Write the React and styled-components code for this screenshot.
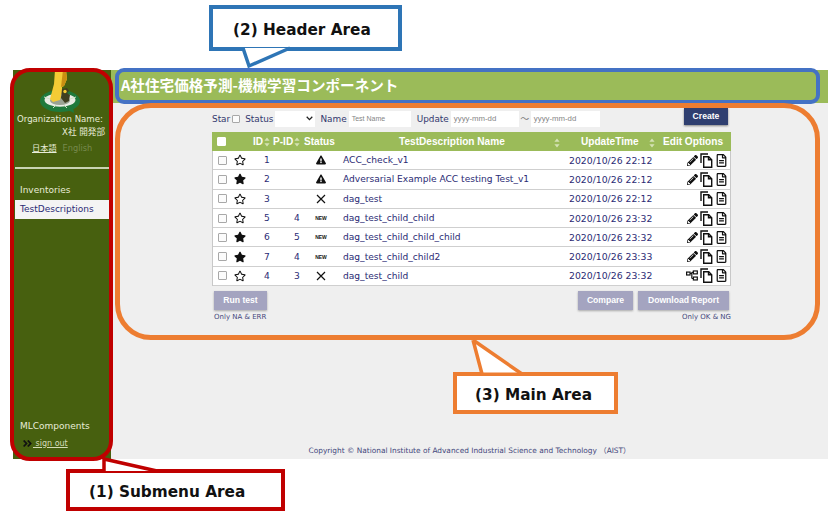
import styled, { createGlobalStyle } from "styled-components"
import { FaStar, FaRegStar, FaExclamationTriangle, FaPencilAlt, FaRegFileAlt, FaAngleDoubleRight } from "react-icons/fa"

const GlobalStyle = createGlobalStyle`
    html, body {
        margin: 0;
        padding: 0;
        background: #fff;
        font-family: "DejaVu Sans", "Noto Sans CJK JP", sans-serif;
    }
`

const rows = [
    { id: 1, star: false, status: "warn", name: "ACC_check_v1", time: "2020/10/26 22:12", edit: "pencil" },
    { id: 2, star: true, status: "warn", name: "Adversarial Example ACC testing Test_v1", time: "2020/10/26 22:12", edit: "pencil" },
    { id: 3, star: false, status: "cross", name: "dag_test", time: "2020/10/26 22:12" },
    { id: 5, pid: 4, star: false, status: "new", name: "dag_test_child_child", time: "2020/10/26 23:32", edit: "pencil" },
    { id: 6, pid: 5, star: true, status: "new", name: "dag_test_child_child_child", time: "2020/10/26 23:32", edit: "pencil" },
    { id: 7, pid: 4, star: true, status: "new", name: "dag_test_child_child2", time: "2020/10/26 23:33", edit: "pencil" },
    { id: 4, pid: 3, star: false, status: "cross", name: "dag_test_child", time: "2020/10/26 23:32", edit: "tree" },
]

const Logo = () => (
    <svg width="44" height="44" viewBox="0 0 44 44">
        <ellipse cx="22" cy="31" rx="20" ry="11" fill="#1f7a3c" />
        <path d="M30 40l6 3-1-6z" fill="#1f7a3c" />
        <ellipse cx="22" cy="30" rx="15.5" ry="6.8" fill="#e9ece5" />
        <ellipse cx="22" cy="30.5" rx="10" ry="4.6" fill="#9aa394" />
        <path d="M6 27l6 2M38 27l-6 2M15 38l3-3M29 38l-3-3" stroke="#cfe0c8" strokeWidth="1" />
        <path d="M17 0h11l1 9-3 7-2 1 0 6-2 7-7 2-3-3 4-15z" fill="#f4cb35" />
        <path d="M25 0h3l1 9-3 7-3 1z" fill="#c98f12" />
        <path d="M24 19l5-1 2 3-2 2 3 2-1 6-4 2-4-5z" fill="#3f3f20" />
        <circle cx="27" cy="21.5" r="1.7" fill="#f4cb35" />
    </svg>
)

const CopyIcon = () => (
    <svg width="13" height="15" viewBox="0 0 13 15" fill="none" stroke="#111" strokeWidth="1.4">
        <path d="M1 10V1h7" />
        <path d="M3.7 3.7h5l3 3v7.6h-8z" fill="#fff" />
        <path d="M8.5 3.7v3h3" />
    </svg>
)

const TreeIcon = () => (
    <svg width="12" height="11" viewBox="0 0 14 12" fill="none" stroke="#111" strokeWidth="1.4">
        <rect x="0.7" y="2" width="4" height="3.4" />
        <rect x="8.6" y="0.7" width="4.6" height="3.4" />
        <rect x="8.6" y="7.8" width="4.6" height="3.4" />
        <path d="M4.7 3.6h2.1M6.8 2.3v7.2M6.8 2.3h1.8M6.8 9.5h1.8" />
    </svg>
)

const CrossIcon = () => (
    <svg width="10" height="10" viewBox="0 0 10 10" stroke="#111" strokeWidth="1.2">
        <path d="M1 1l8 8M9 1l-8 8" />
    </svg>
)

const StatusIcon = ({ type }) => {
    if (type === "warn") return <FaExclamationTriangle size={10} color="#111" />
    if (type === "cross") return <CrossIcon />
    return <NewMark>NEW</NewMark>
}

const SortMark = () => (
    <svg width="6" height="10" viewBox="0 0 6 10" fill="#d5e2b5">
        <path d="M3 0.5l2.6 3.2H0.4zM3 9.5L0.4 6.3h5.2z" />
    </svg>
)

const App = () => {
    return (
        <>
            <GlobalStyle />
            <Frame>
                <Sidebar>
                    <LogoBox><Logo /></LogoBox>
                    <OrgLabel>Organization Name:</OrgLabel>
                    <OrgName>X社 開発部</OrgName>
                    <LangRow>
                        <LangLink>日本語</LangLink>
                        <LangOff>English</LangOff>
                    </LangRow>
                    <Rule />
                    <NavItem>Inventories</NavItem>
                    <NavItem $active>TestDescriptions</NavItem>
                    <SideBottom>
                        <NavItem>MLComponents</NavItem>
                        <SignOut>
                            <FaAngleDoubleRight size={11} color="#111" />
                            <span>&nbsp;sign out</span>
                        </SignOut>
                    </SideBottom>
                </Sidebar>
                <Content>
                    <Header>A社住宅価格予測-機械学習コンポーネント</Header>
                    <Main>
                        <Panel>
                            <Filters>
                                <FilterLabel>Star</FilterLabel>
                                <Check $size={8} $ml={2} />
                                <FilterLabel $ml={5}>Status</FilterLabel>
                                <FilterBox $w={40} $ml={2}>
                                    <svg width="7" height="5" viewBox="0 0 7 5" fill="none" stroke="#222" strokeWidth="1.3">
                                        <path d="M0.7 0.8l2.8 2.8 2.8-2.8" />
                                    </svg>
                                </FilterBox>
                                <FilterLabel $ml={5}>Name</FilterLabel>
                                <FilterInput $w={62} $ml={2}>Test Name</FilterInput>
                                <FilterLabel $ml={6}>Update</FilterLabel>
                                <FilterInput $w={68} $ml={2} $date>yyyy-mm-dd</FilterInput>
                                <Tilde>〜</Tilde>
                                <FilterInput $w={69} $ml={0} $date>yyyy-mm-dd</FilterInput>
                                <CreateButton>Create</CreateButton>
                            </Filters>
                            <Table>
                                <HeadRow>
                                    <Cell><Check $size={9} $white /></Cell>
                                    <Cell />
                                    <Cell $pl={4}>ID<SortMark /></Cell>
                                    <Cell $pl={0}>P-ID<SortMark /></Cell>
                                    <Cell $pl={3}>Status</Cell>
                                    <HeadName>TestDescription Name<SortPos><SortMark /></SortPos></HeadName>
                                    <HeadName $pl={17}>UpdateTime<SortPos><SortMark /></SortPos></HeadName>
                                    <Cell $pl={4}>Edit Options</Cell>
                                </HeadRow>
                                {rows.map((r) => (
                                    <Row key={r.id}>
                                        <Cell><Check $size={9} /></Cell>
                                        <Cell $pl={2}>{r.star ? <FaStar size={12} color="#111" /> : <FaRegStar size={12} color="#111" />}</Cell>
                                        <Cell $pl={14}>{r.id}</Cell>
                                        <Cell $pl={20}>{r.pid}</Cell>
                                        <StatusCell><StatusIcon type={r.status} /></StatusCell>
                                        <Cell $pl={3}>{r.name}</Cell>
                                        <TimeCell>{r.time}</TimeCell>
                                        <Options>
                                            {r.edit === "pencil" && <FaPencilAlt size={11} color="#111" />}
                                            {r.edit === "tree" && <TreeIcon />}
                                            <CopyIcon />
                                            <FaRegFileAlt size={13} color="#111" />
                                        </Options>
                                    </Row>
                                ))}
                            </Table>
                            <Actions>
                                <ActionGroup>
                                    <ActionButton $w={53}>Run test</ActionButton>
                                    <Note>Only NA &amp; ERR</Note>
                                </ActionGroup>
                                <ActionGroup $right>
                                    <ButtonRow>
                                        <ActionButton $w={55}>Compare</ActionButton>
                                        <ActionButton $w={91}>Download Report</ActionButton>
                                    </ButtonRow>
                                    <Note $pull>Only OK &amp; NG</Note>
                                </ActionGroup>
                            </Actions>
                        </Panel>
                        <Footer>Copyright © National Institute of Advanced Industrial Science and Technology （AIST）</Footer>
                    </Main>
                </Content>
            </Frame>

            <Outline $color="#c00000" $x={10} $y={68} $w={103} $h={393} $b={4} $r={20} />
            <Outline $color="#4472c4" $x={115} $y={68} $w={705} $h={36} $b={4} $r={9} />
            <Outline $color="#ed7d31" $x={115} $y={103} $w={705} $h={237} $b={5} $r={36} />

            <Callout $color="#c00000" $x={66} $y={469} $w={219} $h={42} $pl={23}>(1) Submenu Area</Callout>
            <Callout $color="#2e75b6" $x={209} $y={5} $w={193} $h={46} $pl={24}>(2) Header Area</Callout>
            <Callout $color="#ed7d31" $x={453} $y={372} $w={165} $h={42} $pl={22}>(3) Main Area</Callout>

            <Tails width="838" height="520" viewBox="0 0 838 520" fill="#fff" strokeWidth="3.5">
                <path d="M104 471V459L157 471" stroke="#c00000" />
                <path d="M243 48L249 66L290 48" stroke="#2e75b6" />
                <path d="M473 340L482 372.5H522z" stroke="none" />
                <path d="M473 340L482 374M473 340L522 374" stroke="#ed7d31" fill="none" />
            </Tails>
        </>
    )
}

export default App

const Frame = styled.div`
    display: flex;
    width: 815px;
    height: 389px;
    margin: 70px 0 0 13px;
    background: #efefef;
`

const Sidebar = styled.aside`
    display: flex;
    flex-direction: column;
    width: 98px;
    padding: 0 0 9px 2px;
    box-sizing: border-box;
    background: #47600f;
    color: #e8ecd8;
    font-size: 9px;
`

const LogoBox = styled.div`
    display: flex;
    justify-content: center;
    padding-right: 6px;
    height: 43px;
`

const OrgLabel = styled.div`
    line-height: 13px;
    padding-left: 2px;
    white-space: nowrap;
    font-size: 8.6px;
`

const OrgName = styled.div`
    line-height: 13px;
    text-align: right;
    padding-right: 6px;
    font-size: 8.6px;
`

const LangRow = styled.div`
    display: flex;
    gap: 6px;
    margin-top: 3px;
    padding-left: 17px;
    line-height: 13px;
    font-size: 8.2px;
`

const LangLink = styled.span`
    text-decoration: underline;
`

const LangOff = styled.span`
    color: #778a4e;
`

const Rule = styled.div`
    height: 2px;
    margin: 12px 0 11.5px;
    background: #c9d3b3;
`

const NavItem = styled.div`
    height: 19px;
    line-height: 19px;
    padding-left: 5px;
    font-size: 9px;
    white-space: nowrap;
    background: ${(p) => (p.$active ? "#f4f4f4" : "transparent")};
    color: ${(p) => (p.$active ? "#2b2b74" : "#e8ecd8")};
`

const SideBottom = styled.div`
    margin-top: auto;
`

const SignOut = styled.div`
    display: flex;
    align-items: center;
    padding-left: 7px;
    height: 14px;
    font-size: 8px;
    color: #d5dcb9;
    span {
        text-decoration: underline;
    }
`

const Content = styled.div`
    flex: 1;
    display: flex;
    flex-direction: column;
    min-width: 0;
`

const Header = styled.header`
    height: 33px;
    line-height: 29px;
    padding-left: 10px;
    background: #9bbb59;
    color: #fff;
    font-size: 14.6px;
    font-weight: 700;
    font-family: "Noto Sans CJK JP", sans-serif;
`

const Main = styled.main`
    flex: 1;
    display: flex;
    flex-direction: column;
    align-items: center;
    position: relative;
`

const Panel = styled.div`
    width: 519px;
    margin-left: 4px;
`

const Filters = styled.div`
    display: flex;
    align-items: center;
    box-sizing: border-box;
    height: 29px;
    padding-top: 2px;
    color: #33386e;
    font-size: 8.9px;
`

const FilterLabel = styled.span`
    margin-left: ${(p) => p.$ml || 0}px;
`

const Check = styled.span`
    display: inline-block;
    box-sizing: border-box;
    width: ${(p) => p.$size}px;
    height: ${(p) => p.$size}px;
    margin-left: ${(p) => p.$ml || 0}px;
    border: 1px solid ${(p) => (p.$white ? "#fff" : "#a8a8a8")};
    border-radius: 1px;
    background: ${(p) => (p.$white ? "#fff" : "#fbfbfb")};
`

const FilterBox = styled.div`
    display: flex;
    align-items: center;
    justify-content: flex-end;
    box-sizing: border-box;
    width: ${(p) => p.$w}px;
    height: 16px;
    margin-left: ${(p) => p.$ml}px;
    padding-right: 2px;
    background: #fff;
`

const FilterInput = styled.div`
    box-sizing: border-box;
    width: ${(p) => p.$w}px;
    height: 16px;
    line-height: 16px;
    margin-left: ${(p) => p.$ml}px;
    padding-left: 3px;
    background: #fff;
    color: #858585;
    font-family: "Liberation Sans", sans-serif;
    font-size: ${(p) => (p.$date ? 7.8 : 7)}px;
`

const Tilde = styled.span`
    width: 12px;
    text-align: center;
    color: #7a7a7a;
    font-family: "Noto Sans CJK JP", sans-serif;
    font-size: 9px;
`

const CreateButton = styled.div`
    width: 44px;
    height: 17px;
    line-height: 17px;
    margin: -4px 3px 0 auto;
    text-align: center;
    background: #2f3f70;
    color: #fff;
    font-family: "Liberation Sans", sans-serif;
    font-size: 8.6px;
    font-weight: 700;
    box-shadow: 0 1px 2px rgba(0, 0, 0, 0.45);
`

const Table = styled.div`
    display: flex;
    flex-direction: column;
    border-left: 1px solid #c8c8c8;
    border-right: 1px solid #c8c8c8;
    color: #2b2b74;
    font-size: 9.1px;
`

const columns = "19px 18px 24px 28px 38px 225px 95px 70px"

const HeadRow = styled.div`
    display: grid;
    grid-template-columns: ${columns};
    align-items: center;
    height: 19px;
    margin: 0 -1px;
    background: #9bbb59;
    color: #fff;
    font-family: "Liberation Sans", "DejaVu Sans", sans-serif;
    font-size: 10.1px;
    font-weight: 700;
`

const Row = styled.div`
    display: grid;
    grid-template-columns: ${columns};
    align-items: center;
    box-sizing: border-box;
    height: 19.3px;
    background: #fff;
    border-bottom: 1.5px solid #cfcfcf;
`

const Cell = styled.div`
    display: flex;
    align-items: center;
    gap: 1px;
    padding-left: ${(p) => (p.$pl === undefined ? 5 : p.$pl)}px;
    white-space: nowrap;
`

const TimeCell = styled.div`
    padding-left: 4px;
    font-size: 9.3px;
    white-space: nowrap;
`

const HeadName = styled.div`
    position: relative;
    padding-left: ${(p) => p.$pl === undefined ? 60 : p.$pl}px;
    white-space: nowrap;
`

const SortPos = styled.span`
    position: absolute;
    right: 4px;
    top: 2px;
`

const StatusCell = styled.div`
    display: flex;
    justify-content: center;
    align-items: center;
`

const NewMark = styled.span`
    color: #111;
    font-family: "Liberation Sans", sans-serif;
    font-size: 5px;
    font-weight: 700;
`

const Options = styled.div`
    display: flex;
    justify-content: flex-end;
    align-items: center;
    gap: 2px;
    padding-right: 2px;
`

const Actions = styled.div`
    display: flex;
    justify-content: space-between;
    padding: 5px 2px 0;
`

const ActionGroup = styled.div`
    display: flex;
    flex-direction: column;
    align-items: ${(p) => (p.$right ? "flex-end" : "flex-start")};
`

const ButtonRow = styled.div`
    display: flex;
    gap: 5px;
`

const ActionButton = styled.div`
    width: ${(p) => p.$w}px;
    height: 19px;
    line-height: 19px;
    text-align: center;
    background: #a4a4c0;
    color: #fff;
    font-family: "Liberation Sans", sans-serif;
    font-size: 8.6px;
    font-weight: 700;
    box-shadow: 0 1px 2px rgba(0, 0, 0, 0.3);
`

const Note = styled.div`
    margin-top: 1px;
    margin-right: ${(p) => (p.$pull ? -2 : 0)}px;
    line-height: 12px;
    color: #44487c;
    font-size: 7px;
`

const Footer = styled.footer`
    position: absolute;
    bottom: 4px;
    left: 0;
    right: 0;
    text-align: center;
    color: #44487c;
    font-size: 7.4px;
`

const Outline = styled.div`
    position: absolute;
    box-sizing: border-box;
    left: ${(p) => p.$x}px;
    top: ${(p) => p.$y}px;
    width: ${(p) => p.$w}px;
    height: ${(p) => p.$h}px;
    border: ${(p) => p.$b}px solid ${(p) => p.$color};
    border-radius: ${(p) => p.$r}px;
`

const Callout = styled.div`
    position: absolute;
    box-sizing: border-box;
    left: ${(p) => p.$x}px;
    top: ${(p) => p.$y}px;
    width: ${(p) => p.$w}px;
    height: ${(p) => p.$h}px;
    line-height: ${(p) => p.$h - 4}px;
    padding-left: ${(p) => p.$pl - 4}px;
    border: 4px solid ${(p) => p.$color};
    background: #fff;
    color: #111;
    font-size: 15.3px;
    font-weight: 700;
    white-space: nowrap;
`

const Tails = styled.svg`
    position: absolute;
    left: 0;
    top: 0;
    pointer-events: none;
`
